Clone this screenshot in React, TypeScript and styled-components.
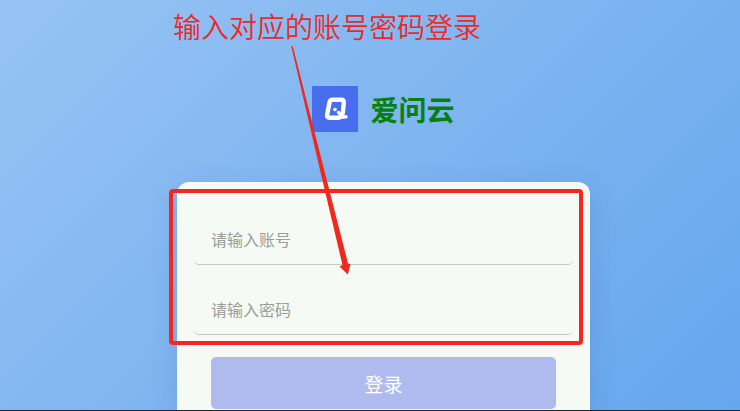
import React from "react";
import styled, { createGlobalStyle } from "styled-components";

const GlobalStyle = createGlobalStyle`
  *, *::before, *::after { box-sizing: border-box; }
  body {
    margin: 0;
    font-family: "Noto Sans CJK SC", "Noto Sans", sans-serif;
  }
`;

const Page = styled.main`
  display: flex;
  justify-content: center;
  height: 100vh;
  padding-left: 27px;
  overflow: hidden;
  border-bottom: 1px solid #1c2733;
  background: linear-gradient(135deg, #97c3f3 0%, #65a6ee 100%);
`;

const Column = styled.div`
  position: relative;
  display: flex;
  flex-direction: column;
  flex: 0 1 413px;
  padding-top: 86px;
`;

const Brand = styled.header`
  display: flex;
  align-items: center;
  justify-content: center;
  gap: 12px;
  height: 46px;
  margin-bottom: 50px;
`;

const Logo = styled.svg`
  width: 46px;
  height: 46px;
`;

const BrandName = styled.h1`
  margin: 0;
  color: #078010;
  font-size: 28px;
  font-weight: 700;
  line-height: 46px;
`;

const Card = styled.form`
  position: relative;
  display: flex;
  flex-direction: column;
  flex: 1 0 auto;
  gap: 20px;
  padding: 33px 17px 0;
  border-radius: 12px 12px 0 0;
  background: #f5faf5;
  box-shadow: 0 8px 28px rgba(31, 60, 135, 0.16);
`;

const Field = styled.input`
  width: 100%;
  height: 50px;
  padding: 0 17px 2px;
  border: 0;
  border-bottom: 1px solid #c3c9c4;
  border-radius: 5px;
  outline: 0;
  background: transparent;
  color: #333;
  font: inherit;
  font-size: 16px;

  &::placeholder {
    color: #9a9d9a;
    opacity: 1;
  }
`;

const SubmitButton = styled.button`
  height: 52px;
  margin: 2px 17px 0;
  padding: 0;
  border: 0;
  border-radius: 5px;
  background: #afbbef;
  color: #fff;
  font: inherit;
  font-size: 19px;
`;

const Highlight = styled.div`
  position: absolute;
  top: 7px;
  right: 7px;
  left: -8px;
  height: 156px;
  border: 4px solid #f5261b;
  border-radius: 4px;
  pointer-events: none;
`;

const Note = styled.p`
  position: absolute;
  top: 6px;
  left: -4px;
  margin: 0;
  color: #ee2824;
  font-size: 28px;
  font-weight: 350;
  line-height: 40px;
  white-space: nowrap;
`;

const Arrow = styled.svg`
  position: absolute;
  top: 46px;
  left: 114px;
  width: 60px;
  height: 229px;
  pointer-events: none;
`;

export default function App() {
  return (
    <>
      <GlobalStyle />
      <Page>
        <Column>
          <Brand>
            <Logo viewBox="0 0 46 46" aria-hidden="true">
              <rect width="46" height="46" rx="1" fill="#486eee" />
              <path
                d="M30.800 27 31.800 16.500Q32 13.800 29.500 13.800H20.500Q18 13.800 17.500 16.500L15.200 28.500Q14.700 31.800 17.500 31.800H27"
                fill="none"
                stroke="#fff"
                strokeWidth="4.400"
                strokeLinejoin="round"
                strokeLinecap="round"
              />
              <path d="M26.500 26.500 31 31M28 31.300 34 30.800" fill="none" stroke="#fff" strokeWidth="3.400" strokeLinecap="round" />
              <circle cx="23" cy="23.500" r="1.800" fill="#fff" />
            </Logo>
            <BrandName>爱问云</BrandName>
          </Brand>
          <Card onSubmit={(event) => event.preventDefault()}>
            <Field type="text" aria-label="账号" placeholder="请输入账号" />
            <Field type="password" aria-label="密码" placeholder="请输入密码" />
            <SubmitButton type="submit">登录</SubmitButton>
            <Highlight />
          </Card>
          <Note>输入对应的账号密码登录</Note>
          <Arrow viewBox="0 0 60 229" aria-hidden="true">
            <path d="M0.300 0.200 1.700 0 33 123 57 217.500 59.500 218 56.800 228.500 48.500 220.500 51.500 219 29 124Z" fill="#f0291f" />
          </Arrow>
        </Column>
      </Page>
    </>
  );
}
